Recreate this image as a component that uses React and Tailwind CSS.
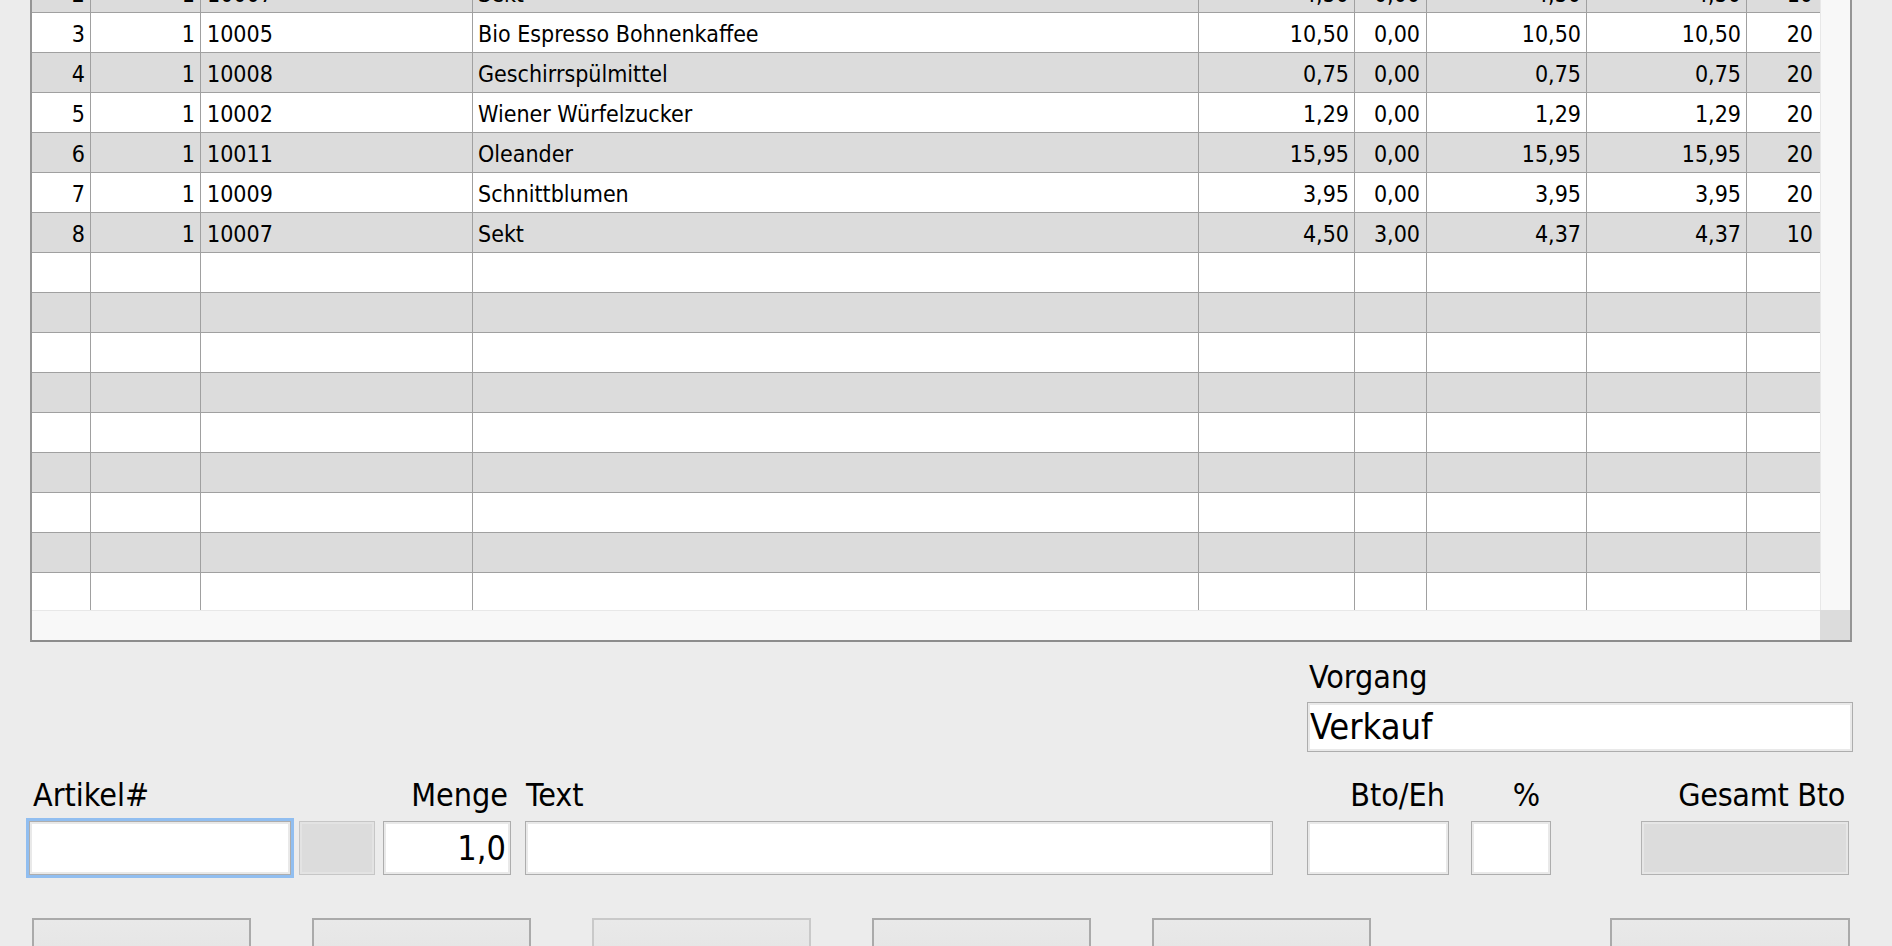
const COLS = [
    { w: 59, align: 'right', pad: 'pr-[5px]' },
    { w: 110, align: 'right', pad: 'pr-[5px]' },
    { w: 272, align: 'left', pad: 'pl-[6px]' },
    { w: 726, align: 'left', pad: 'pl-[5px]' },
    { w: 156, align: 'right', pad: 'pr-[5px]' },
    { w: 72, align: 'right', pad: 'pr-[6px]' },
    { w: 160, align: 'right', pad: 'pr-[5px]' },
    { w: 160, align: 'right', pad: 'pr-[5px]' },
    { w: 73, align: 'right', pad: 'pr-[7px]' },
];

const ROWS = [
    ['2', '1', '10007', 'Sekt', '4,50', '0,00', '4,50', '4,50', '10'],
    ['3', '1', '10005', 'Bio Espresso Bohnenkaffee', '10,50', '0,00', '10,50', '10,50', '20'],
    ['4', '1', '10008', 'Geschirrspülmittel', '0,75', '0,00', '0,75', '0,75', '20'],
    ['5', '1', '10002', 'Wiener Würfelzucker', '1,29', '0,00', '1,29', '1,29', '20'],
    ['6', '1', '10011', 'Oleander', '15,95', '0,00', '15,95', '15,95', '20'],
    ['7', '1', '10009', 'Schnittblumen', '3,95', '0,00', '3,95', '3,95', '20'],
    ['8', '1', '10007', 'Sekt', '4,50', '3,00', '4,37', '4,37', '10'],
];

// leere Zeilen bis zum unteren Rand des Viewports
const EMPTY = Array.from({ length: 9 }, () => Array(9).fill(''));

function Row({ cells, odd }) {
    return (
        <div className={`flex h-[40px] border-b border-[#a0a0a0] ${odd ? 'bg-white' : 'bg-[#dcdcdc]'}`}>
            {cells.map((c, i) => (
                <div
                    key={i}
                    style={{ width: COLS[i].w }}
                    className={`shrink-0 flex items-center pt-[3px] text-[23px] leading-none whitespace-nowrap overflow-hidden
                        ${i < COLS.length - 1 ? 'border-r border-[#a0a0a0]' : ''}
                        ${COLS[i].align === 'right' ? 'justify-end' : 'justify-start'} ${COLS[i].pad}`}
                >
                    {c}
                </div>
            ))}
        </div>
    );
}

function Field({ className = '', children }) {
    return (
        <div className={`h-[54px] border border-[#adadad] bg-white shadow-[inset_0_0_0_2px_#e9e9e9] ${className}`}>
            {children}
        </div>
    );
}

function Button({ disabled, className = '' }) {
    return (
        <div
            className={`h-[60px] border-2 bg-gradient-to-b from-[#e9e9e9] to-[#e3e3e3]
                ${disabled ? 'border-[#c9c9c9]' : 'border-[#aaaaaa]'} ${className}`}
        />
    );
}

export default function App() {
    const rows = [...ROWS, ...EMPTY];

    return (
        <div className="w-[1892px] h-[946px] overflow-hidden bg-[#ececec] text-black font-['DejaVu_Sans_Condensed','DejaVu_Sans',sans-serif] font-stretch-condensed">

            {/* ── Positionstabelle ───────────────────────────────────── */}
            <div className="ml-[30px] w-[1822px] h-[642px] border-x-2 border-b-2 border-x-[#959595] border-b-[#8c8c8c] flex flex-col">
                <div className="flex h-[610px]">
                    <div className="w-[1788px] h-full overflow-hidden">
                        <div className="-mt-[27px]">
                            {rows.map((r, i) => (
                                <Row key={i} cells={r} odd={i % 2 === 1} />
                            ))}
                        </div>
                    </div>
                    <div className="w-[30px] h-full bg-[#f8f8f8] border-l border-[#e8e8e8]" />
                </div>
                <div className="flex h-[30px]">
                    <div className="w-[1788px] bg-[#f8f8f8] border-t border-[#e8e8e8]" />
                    <div className="w-[30px] bg-[#dcdcdc]" />
                </div>
            </div>

            {/* ── Vorgang ────────────────────────────────────────────── */}
            <div className="flex justify-end pr-[39px] mt-[17px]">
                <div className="w-[546px]">
                    <div className="text-[32px] leading-[36px] pl-[2px]">Vorgang</div>
                    <Field className="mt-[7px] !h-[50px] flex items-center pl-[2px] text-[36px] leading-[50px]">
                        Verkauf
                    </Field>
                </div>
            </div>

            {/* ── Eingabezeile ───────────────────────────────────────── */}
            <div className="flex items-end mt-[25px] pl-[29px] text-[32px] leading-[36px]">
                <div className="w-[262px]">
                    <div className="pl-[4px]">Artikel#</div>
                    <Field className="mt-[8px] ring-[3px] ring-[#91bef0] border-[#8fa9c8]" />
                </div>
                <div className="w-[76px] ml-[8px]">
                    <div className="h-[54px] border border-[#c6c6c6] bg-[#dcdcdc] shadow-[inset_0_0_0_2px_#e3e3e3]" />
                </div>
                <div className="w-[128px] ml-[8px]">
                    <div className="text-right pr-[3px]">Menge</div>
                    <Field className="mt-[8px] flex items-center justify-end pr-[4px] text-[34px] leading-[54px]">
                        1,0
                    </Field>
                </div>
                <div className="w-[748px] ml-[14px]">
                    <div className="pl-[1px]">Text</div>
                    <Field className="mt-[8px]" />
                </div>
                <div className="w-[142px] ml-[34px]">
                    <div className="text-right pr-[4px]">Bto/Eh</div>
                    <Field className="mt-[8px]" />
                </div>
                <div className="w-[80px] ml-[22px]">
                    <div className="text-right pr-[11px]">%</div>
                    <Field className="mt-[8px]" />
                </div>
                <div className="w-[208px] ml-[90px]">
                    <div className="text-right pr-[4px] tracking-[-0.3px]">Gesamt Bto</div>
                    <div className="mt-[8px] h-[54px] border border-[#b2b2b2] bg-[#dcdcdc] shadow-[inset_0_0_0_2px_#e6e6e6]" />
                </div>
            </div>

            {/* ── Funktionstasten ────────────────────────────────────── */}
            <div className="flex mt-[43px] pl-[32px]">
                <Button className="w-[219px]" />
                <Button className="w-[219px] ml-[61px]" />
                <Button className="w-[219px] ml-[61px]" disabled />
                <Button className="w-[219px] ml-[61px]" />
                <Button className="w-[219px] ml-[61px]" />
                <Button className="w-[240px] ml-[239px]" />
            </div>
        </div>
    );
}
